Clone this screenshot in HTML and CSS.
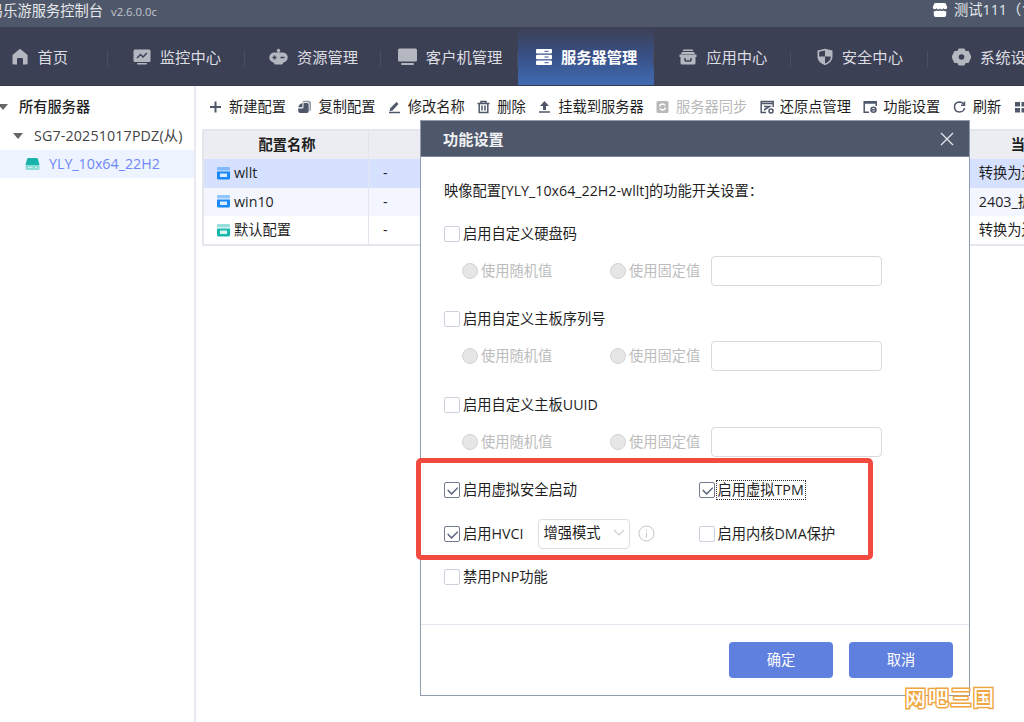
FILE: index.html
```
<!DOCTYPE html>
<html lang="zh-CN">
<head>
    <meta charset="UTF-8">
    <title>易乐游服务控制台</title>
    <link rel="stylesheet" href="styles.css">
</head>
<body>
    <header class="titlebar">
        <div class="brand">易乐游服务控制台<span class="version">v2.6.0.0c</span></div>
        <div class="account">
            <svg width="16" height="16" viewBox="0 0 16 16" fill="#fff"><path d="M3.500 1h9q1 0 1.400 1L15.200 5c.3 2.400-2.800 2.900-3.800 1.300-.8 1.600-2.900 1.600-3.400 0-.5 1.600-2.600 1.600-3.400 0C3.600 7.900.5 7.400.8 5L2.100 2q.4-1 1.400-1z"/><path d="M1.800 9q1.700.6 2.900-.6 1.600 1.300 3.300 0 1.700 1.300 3.300 0Q12.500 9.600 14.200 9v4q0 2-2 2H3.800q-2 0-2-2z"/></svg>
            <span>测试111（1）</span>
        </div>
    </header>

    <nav class="nav">
        <a class="tab">
            <svg width="16" height="18" viewBox="0 0 16 18"><path d="M7 1.500q1-.8 2 0l6 5q.6.500.6 1.200V15q0 1.500-1.500 1.500H11V11q0-1-1-1H6q-1 0-1 1v5.500H2Q.5 16.500.5 15V7.700q0-.7.6-1.200z"/></svg>
            <span>首页</span>
        </a>
        <a class="tab">
            <svg width="18" height="18" viewBox="0 0 18 18"><rect x=".5" y="1.500" width="17" height="12.500" rx="1.500"/><rect x="4" y="15" width="10" height="1.500" rx=".7"/><path class="cut" d="M4 10l3.500-3.500 2.500 2.500L14 5"/></svg>
            <span>监控中心</span>
        </a>
        <a class="tab">
            <svg width="19" height="18" viewBox="0 0 19 18"><circle cx="9.500" cy="2.500" r="1.700"/><path d="M9 3h1v3H9z"/><rect x=".3" y="4.500" width="18.400" height="10" rx="5"/><path d="M4 14h11l-2 2.500H6z"/><path class="cut" d="M3.500 9.500h4M5.500 7.500v4M11.500 9.500h4"/></svg>
            <span>资源管理</span>
        </a>
        <a class="tab">
            <svg width="19" height="18" viewBox="0 0 19 18"><rect width="19" height="13" rx="1.500" y=".5"/><rect x="3" y="15" width="13" height="2" rx="1"/></svg>
            <span>客户机管理</span>
        </a>
        <a class="tab active">
            <svg width="16" height="18" viewBox="0 0 16 18"><rect y="1" width="16" height="4.500" rx="1"/><rect y="6.700" width="16" height="4.500" rx="1"/><rect y="12.500" width="16" height="4.500" rx="1"/><path class="cut-active" d="M8.500 3.300h4M8.500 9h4M8.500 14.700h4"/></svg>
            <span>服务器管理</span>
        </a>
        <a class="tab">
            <svg width="18" height="18" viewBox="0 0 18 18"><rect x="4" y="1.500" width="10" height="1.500" rx=".5"/><path d="M3 4h12l1 2H2zM.5 6.500h17V9h-1v6q0 1.500-1.500 1.500H3Q1.500 16.500 1.500 15V9h-1z"/><path class="cut" d="M6 10v2q0 1 1 1h4q1 0 1-1v-2"/></svg>
            <span>应用中心</span>
        </a>
        <a class="tab">
            <svg width="16" height="18" viewBox="0 0 16 18"><path d="M8 .7l7.500 1.800V9q0 5-7.500 8.300Q.5 14 .5 9V2.500z"/><path class="hole" d="M8 2.500V8.500H2.200V3.800zM8 8.500h5.800Q14 13 8 15.500z"/></svg>
            <span>安全中心</span>
        </a>
        <a class="tab">
            <svg width="19" height="18" viewBox="0 0 19 18"><path stroke="#b5b7c0" stroke-width="1.500" stroke-linejoin="round" d="M7 1.200h5l1.200 2.600 2.900-.1L18.200 8v2L16 14.300l-2.900-.1L12 16.800H7l-1.200-2.600-2.900.1L.8 10V8L3 3.700l2.900.1z"/><circle class="hole" cx="9.500" cy="9" r="2.800"/></svg>
            <span>系统设置</span>
        </a>
    </nav>

    <div class="workspace">
        <aside class="sidebar">
            <div class="node root"><i class="arrow"></i>所有服务器</div>
            <div class="node server"><i class="arrow"></i>SG7-20251017PDZ(从)</div>
            <div class="node image">
                <svg width="15" height="14" viewBox="0 0 15 14"><path fill="#18b3ab" d="M3.500 1h8q1 0 1.400 1L14.500 8H.5L2.100 2q.4-1 1.400-1z"/><rect x=".5" y="8" width="14" height="5" rx="1" fill="#8bdcd6"/><path d="M3 10.500h4M10 10.500h2" stroke="#c9f0ed"/></svg>
                <span>YLY_10x64_22H2</span>
            </div>
        </aside>

        <main class="main">
            <div class="toolbar">
                <a class="tool"><svg width="14" height="14" viewBox="0 0 14 14"><path class="line" d="M6.500 1.500v11M1 7h11"/></svg>新建配置</a>
                <a class="tool"><svg width="14" height="14" viewBox="0 0 14 14"><path d="M6 .8h4.500q2.500 0 2.500 2.500V9q0 2-1.500 2.500V5Q11.500 2.300 9 2.300H4Q4.500.8 6 .8z" opacity=".6"/><path d="M5.500 3H9q1.700 0 1.700 1.700V11q0 2-2 2H2.200q-2 0-2-2V8.500h3.800q1.500 0 1.500-1.500z"/><path d="M4.500 3v4.300H.3Q1 4 4.500 3z"/></svg>复制配置</a>
                <a class="tool"><svg width="14" height="14" viewBox="0 0 14 14"><path d="M8.500 2l2 2-6 6.500-3 .8.800-3z"/><path class="line thin" d="M1 12.500h11"/></svg>修改名称</a>
                <a class="tool"><svg width="14" height="14" viewBox="0 0 14 14"><path class="line thin" d="M.5 3.500h12M4 3V1.500h5V3M2.200 4v8.500h8.600V4M5 5.500v5M8 5.500v5"/></svg>删除</a>
                <a class="tool"><svg width="14" height="14" viewBox="0 0 14 14"><path d="M6.500 1l4.500 5H8v4H5V6H2z"/><path class="line thin" d="M1 12h11"/></svg>挂载到服务器</a>
                <a class="tool disabled"><svg width="14" height="14" viewBox="0 0 14 14"><rect x=".5" y="1" width="12" height="12" rx="1.500"/><path d="M3.500 6.500Q4 4 6.500 4q1.500 0 2.700 1.500M9.500 7.500Q9 10 6.500 10 5 10 3.800 8.500" fill="none" stroke="#fff" stroke-width="1.300"/></svg>服务器同步</a>
                <a class="tool"><svg width="14" height="14" viewBox="0 0 14 14"><path class="line thin" d="M6 12.500H1.200V1.500h12V7M1 3.500h12M4 6.500h5.500L4 10"/><circle class="line thin" cx="11" cy="11" r="2"/></svg>还原点管理</a>
                <a class="tool"><svg width="14" height="14" viewBox="0 0 14 14"><path class="line thin" d="M6 12.300H1.200V1.700h12V6M1 3h12"/><circle class="line thin" cx="10.500" cy="9.800" r="2.500"/><path class="line thin" d="M9 9.800h3"/></svg>功能设置</a>
                <a class="tool"><svg width="14" height="14" viewBox="0 0 14 14"><path class="line thin" d="M10.700 4Q9 2 6.500 2 1.500 2.300 1.500 7q0 4.700 5 5 4.500-.3 5-4M11.500 1.500v3.700H8"/></svg>刷新</a>
                <a class="tool"><svg width="14" height="14" viewBox="0 0 14 14"><path d="M1 2h5v4.500H1zM7.500 2h5v4.500h-5zM1 8h5v4.500H1zM7.500 8h5v4.500h-5z"/></svg>更多</a>
            </div>

            <div class="table">
                <div class="row head">
                    <div class="cell name">配置名称</div>
                    <div class="cell mid"></div>
                    <div class="cell last">当前还原点</div>
                </div>
                <div class="row selected">
                    <div class="cell name"><svg class="disk" width="13" height="13" viewBox="0 0 13 13"><rect width="13" height="3.500" rx="1" opacity=".45"/><path d="M0 4.500h13V11q0 1.500-1.500 1.500h-10Q0 12.500 0 11z"/><rect x="3" y="6.500" width="7" height="3.500" fill="#fff" opacity=".85"/></svg>wllt</div>
                    <div class="cell mid">-</div>
                    <div class="cell last">转换为还原点</div>
                </div>
                <div class="row striped">
                    <div class="cell name"><svg class="disk" width="13" height="13" viewBox="0 0 13 13"><rect width="13" height="3.500" rx="1" opacity=".45"/><path d="M0 4.500h13V11q0 1.500-1.500 1.500h-10Q0 12.500 0 11z"/><rect x="3" y="6.500" width="7" height="3.500" fill="#fff" opacity=".85"/></svg>win10</div>
                    <div class="cell mid">-</div>
                    <div class="cell last">2403_扩展</div>
                </div>
                <div class="row">
                    <div class="cell name"><svg class="disk green" width="13" height="13" viewBox="0 0 13 13"><rect width="13" height="3.500" rx="1" opacity=".45"/><path d="M0 4.500h13V11q0 1.500-1.500 1.500h-10Q0 12.500 0 11z"/><rect x="3" y="6.500" width="7" height="3.500" fill="#fff" opacity=".85"/></svg>默认配置</div>
                    <div class="cell mid">-</div>
                    <div class="cell last">转换为还原点</div>
                </div>
            </div>
        </main>
    </div>

    <section class="dialog">
        <div class="dialog-head">
            <span>功能设置</span>
            <svg width="14" height="14" viewBox="0 0 14 14"><path d="M1 1l12 12M13 1L1 13" stroke="#e4e7ec" stroke-width="1.300"/></svg>
        </div>
        <div class="dialog-body">
            <p class="intro">映像配置[YLY_10x64_22H2-wllt]的功能开关设置：</p>

            <div class="group">
                <label class="check"><i class="box"></i>启用自定义硬盘码</label>
                <div class="options">
                    <label class="radio"><i class="dot"></i>使用随机值</label>
                    <label class="radio fixed"><i class="dot"></i>使用固定值</label>
                    <div class="input"></div>
                </div>
            </div>
            <div class="group">
                <label class="check"><i class="box"></i>启用自定义主板序列号</label>
                <div class="options">
                    <label class="radio"><i class="dot"></i>使用随机值</label>
                    <label class="radio fixed"><i class="dot"></i>使用固定值</label>
                    <div class="input"></div>
                </div>
            </div>
            <div class="group">
                <label class="check"><i class="box"></i>启用自定义主板UUID</label>
                <div class="options">
                    <label class="radio"><i class="dot"></i>使用随机值</label>
                    <label class="radio fixed"><i class="dot"></i>使用固定值</label>
                    <div class="input"></div>
                </div>
            </div>

            <div class="switches">
                <label class="check"><i class="box on"></i>启用虚拟安全启动</label>
                <label class="check"><i class="box on"></i><span class="focused">启用虚拟TPM</span></label>
            </div>
            <div class="switches hvci">
                <div class="mode">
                    <label class="check"><i class="box on"></i>启用HVCI</label>
                    <div class="select">增强模式<svg width="12" height="8" viewBox="0 0 12 8"><path d="M1 1l5 5 5-5" fill="none" stroke="#cfcfcf" stroke-width="1.200"/></svg></div>
                    <svg class="info" width="17" height="17" viewBox="0 0 17 17"><circle cx="8.500" cy="8.500" r="7.500"/><path d="M8.500 7.500v5M8.500 4.500v1.500"/></svg>
                </div>
                <label class="check"><i class="box"></i>启用内核DMA保护</label>
            </div>
            <div class="switches">
                <label class="check"><i class="box"></i>禁用PNP功能</label>
            </div>
        </div>
        <div class="dialog-foot">
            <button class="btn">确定</button>
            <button class="btn">取消</button>
        </div>
    </section>

    <div class="highlight"></div>
    <div class="watermark">网吧三国</div>
</body>
</html>
```

FILE: styles.css
```
* {
    margin: 0;
    padding: 0;
    box-sizing: border-box;
}

body {
    position: relative;
    width: 1024px;
    height: 722px;
    overflow: hidden;
    display: flex;
    flex-direction: column;
    background: #fff;
    color: #1f1f1f;
    font-family: "Open Sans", "Noto Sans CJK SC", sans-serif;
    font-size: 14.25px;
    line-height: 20px;
    white-space: nowrap;
}

svg {
    flex: none;
    display: block;
}

/* title bar */
.titlebar {
    display: flex;
    justify-content: space-between;
    height: 27px;
    background: #4f586a;
    color: #e6e8ec;
}

.brand {
    margin-left: -11px;
    line-height: 21px;
}

.version {
    margin-left: 8px;
    font-size: 11.3px;
    color: #c3c7cf;
}

.account {
    display: flex;
    gap: 6px;
    width: 92px;
    line-height: 19px;
}

.account svg {
    margin-top: 2px;
}

/* navigation */
.nav {
    display: flex;
    height: 59px;
    margin-left: -28.5px;
    background: #3c4054;
    border-bottom: 1px solid #353a4d;
}

.tab {
    position: relative;
    flex: none;
    display: flex;
    align-items: center;
    justify-content: center;
    gap: 9px;
    width: 136.6px;
    padding: 2px 0 0 1px;
    font-size: 15.3px;
    color: #dcdde2;
    fill: #b5b7c0;
}

.tab span {
    margin-top: -1px;
}

.tab::after {
    content: "";
    position: absolute;
    right: 0;
    top: 24px;
    width: 1px;
    height: 16px;
    background: #4a4e61;
}

.tab.active {
    background: linear-gradient(#3c4054, #385087 50%, #416bb0);
    color: #fff;
    fill: #fff;
    font-weight: 700;
}

.cut,
.cut-active {
    fill: none;
    stroke: #3c4054;
    stroke-width: 1.5;
}

.cut-active {
    stroke: #3a5590;
    stroke-width: 1;
}

.hole {
    fill: #3c4054;
}

/* server tree */
.workspace {
    display: flex;
    flex: 1;
}

.sidebar {
    flex: none;
    width: 196px;
    padding-top: 7px;
    border-right: 2px solid #e8e9f3;
}

.node {
    display: flex;
    align-items: center;
    height: 28.4px;
}

.arrow {
    border: 5px solid transparent;
    border-top: 6px solid #666;
    border-bottom: 0;
}

.root {
    margin-left: -2px;
    gap: 11px;
    font-weight: 500;
}

.server {
    padding-left: 13px;
    gap: 11px;
    color: #444;
    letter-spacing: 0.15px;
}

.image {
    padding-left: 25px;
    gap: 9px;
    background: #edf4ff;
    color: #7086f5;
}

/* toolbar */
.main {
    flex: none;
    width: 828px;
    padding-left: 6px;
    overflow: hidden;
}

.toolbar {
    display: flex;
    gap: 12.4px;
    height: 43px;
    padding-left: 7px;
}

.tool {
    flex: none;
    display: flex;
    align-items: center;
    height: 41px;
    fill: #4f586a;
}

.tool svg {
    width: 14px;
    margin-right: 6px;
}

.line {
    fill: none;
    stroke: #4f586a;
    stroke-width: 2;
}

.thin {
    stroke-width: 1.5;
}

.disabled {
    color: #b9b9b9;
    fill: #b9b9b9;
}

/* configuration list */
.table {
    width: 900px;
    border: 2px solid #e4e6ee;
    border-right: 0;
}

.row {
    display: flex;
    height: 28.3px;
}

.head {
    background: #ecedf2;
    font-weight: 700;
}

.selected {
    background: #d5e1ff;
}

.striped {
    background: #f3f6ff;
}

.cell {
    display: flex;
    align-items: center;
    padding-left: 13px;
    border-right: 1px solid #e2e4ee;
}

.name {
    width: 166px;
    gap: 4px;
}

.mid {
    width: 598px;
    padding-left: 14px;
}

.last {
    width: 140px;
    padding-left: 16px;
}

.head .name {
    justify-content: center;
    padding-left: 2px;
}

.head .last {
    padding-left: 48px;
}

.disk {
    fill: #1989fa;
}

.green {
    fill: #18b9ad;
}

/* dialog */
.dialog {
    position: absolute;
    left: 420px;
    top: 120px;
    width: 550px;
    height: 576px;
    display: flex;
    flex-direction: column;
    background: #fff;
    border: 1px solid #929cb0;
}

.dialog-head {
    display: flex;
    align-items: center;
    justify-content: space-between;
    height: 36px;
    padding: 0 15px 0 22px;
    background: #4f586a;
    border-bottom: 1px solid #7d8698;
    color: #f0f1f4;
    font-size: 15.2px;
    font-weight: 700;
}

.dialog-body {
    flex: 1;
    padding: 24px 0 0 23px;
}

.intro {
    height: 43px;
}

.group {
    height: 85.3px;
}

.check {
    display: flex;
    align-items: center;
    gap: 3px;
    height: 20px;
}

.box {
    position: relative;
    flex: none;
    width: 16px;
    height: 16px;
    border: 1px solid #cfd0dc;
    border-radius: 2px;
}

.box.on {
    border-color: #737b90;
}

.box.on::after {
    content: "";
    position: absolute;
    left: 3px;
    top: 3px;
    width: 8px;
    height: 4.5px;
    border: solid #5c667e;
    border-width: 0 0 1px 1px;
    box-shadow: -0.5px 0.5px 0 #5c667e;
    transform: rotate(-45deg);
}

.options {
    display: flex;
    align-items: center;
    height: 30px;
    margin: 12px 0 0 18px;
    color: #bdbdbd;
}

.radio {
    display: flex;
    align-items: center;
    gap: 3px;
    width: 148px;
}

.radio.fixed {
    width: 100.5px;
}

.dot {
    width: 16px;
    height: 16px;
    border: 1px solid #d3d3d6;
    border-radius: 50%;
    background: #e6e6e6;
}

.input {
    width: 171px;
    height: 30px;
    border: 1px solid #d9d9d9;
    border-radius: 4px;
}

.switches {
    display: grid;
    grid-template-columns: 254.5px 1fr;
    align-items: center;
}

.hvci {
    height: 30px;
    margin: 19px 0 18.5px;
}

.mode {
    display: flex;
    align-items: center;
}

.mode .check {
    width: 94.4px;
}

.select {
    display: flex;
    align-items: center;
    justify-content: space-between;
    width: 92px;
    height: 30px;
    padding: 0 4px 2px 4px;
    border: 1px solid #dedede;
    border-radius: 4px;
}

.info {
    margin-left: 8px;
    fill: none;
    stroke: #c4c4c4;
}

.focused {
    height: 20px;
    line-height: 18px;
    margin-left: -2px;
    padding: 0 1px;
    border: 1px dotted #333;
}

.dialog-foot {
    display: flex;
    justify-content: flex-end;
    gap: 16px;
    height: 71px;
    padding: 17px 16px 0 0;
    border-top: 1px solid #e6e7f0;
}

.btn {
    width: 104px;
    height: 36px;
    border: 0;
    border-radius: 4px;
    background: #6080e0;
    color: #fff;
    font: inherit;
}

.highlight {
    position: absolute;
    left: 416px;
    top: 458px;
    width: 457px;
    height: 102px;
    border: 5px solid #f34a40;
    border-radius: 5px;
}

.watermark {
    position: absolute;
    left: 905px;
    top: 682px;
    font-size: 21px;
    letter-spacing: 1.7px;
    line-height: 30px;
    font-weight: 500;
    color: #fff;
    -webkit-text-stroke: 3px #f0a640;
    paint-order: stroke fill;
}
```
